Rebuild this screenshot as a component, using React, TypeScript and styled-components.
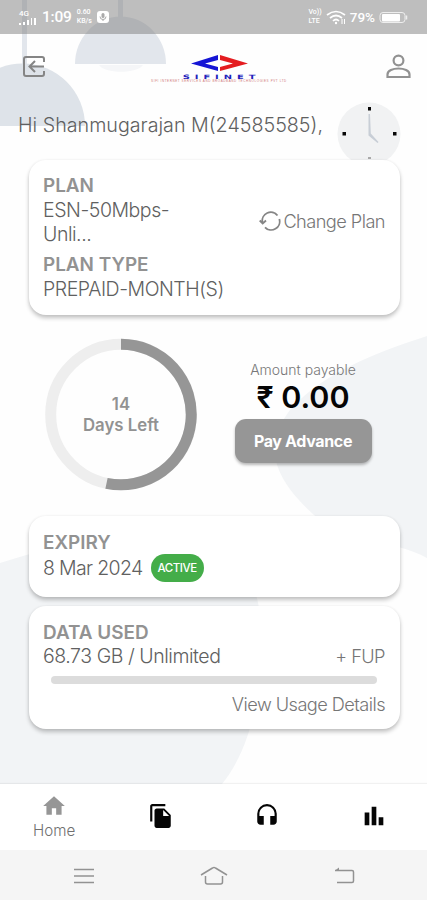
import React from "react";
import styled, { createGlobalStyle } from "styled-components";
import { MdBarChart, MdFileCopy, MdHeadset, MdHome } from "react-icons/md";

const GlobalStyle = createGlobalStyle`
  * { box-sizing: border-box; }
  body { margin: 0; background: #fff; font-family: Inter, "Noto Sans", sans-serif; }
  svg { display: block; flex: none; }
`;

const Screen = styled.div`
  position: relative;
  width: 427px;
  height: 900px;
  overflow: hidden;
  display: flex;
  flex-direction: column;
  background: #fefefe;
  color: #737373;
  isolation: isolate;
`;

const Backdrop = styled.svg`
  position: absolute;
  inset: 0;
  z-index: -1;
`;

const StatusBar = styled.div`
  display: flex;
  justify-content: space-between;
  height: 34px;
  padding: 0 18px 0 19px;
  background: rgba(128, 128, 128, 0.51);
  color: #fff;
`;

const StatusGroup = styled.div<{ $gap: number }>`
  display: flex;
  align-items: center;
  gap: ${(p) => p.$gap}px;
`;

const StatusText = styled.span<{ $size: number; $spacing?: number }>`
  font: 500 ${(p) => p.$size}px/20px Roboto, sans-serif;
  letter-spacing: ${(p) => p.$spacing ?? 0}px;
`;

const TinyStack = styled.div`
  display: flex;
  flex-direction: column;
  font: 500 7px/9px Roboto, sans-serif;
`;

const Signal = styled(TinyStack)`
  font-size: 8px;
`;

const Header = styled.header`
  display: flex;
  justify-content: space-between;
  align-items: flex-start;
  height: 67px;
  padding: 20px 16px 0 23px;
`;

const Brand = styled.div`
  display: flex;
  flex-direction: column;
  align-items: center;
  width: 138px;
  margin-left: 7px;
`;

const BrandName = styled.div`
  height: 5px;
  margin-top: 2px;
  padding-left: 3px;
  color: #2020bb;
  font: 700 6px/6px "DejaVu Sans", sans-serif;
  letter-spacing: 3px;
  transform: scaleX(1.65);
`;

const Tagline = styled.div`
  margin-top: 1px;
  color: #cf7777;
  font: 400 3px/3px "Liberation Sans", sans-serif;
  letter-spacing: 0.6px;
  white-space: nowrap;
`;

const Greeting = styled.div`
  display: flex;
  justify-content: space-between;
  height: 59px;
  padding: 0 26px 0 18px;
`;

const GreetingText = styled.div`
  padding-top: 12px;
  font-size: 19.7px;
  font-weight: 300;
  line-height: 24px;
  color: #606060;
  white-space: nowrap;
`;

const Card = styled.section<{ $height: number; $gap?: number; $top?: number }>`
  width: 371px;
  height: ${(p) => p.$height}px;
  margin: 0 0 ${(p) => p.$gap ?? 0}px 29px;
  padding: ${(p) => p.$top ?? 15}px 15px 0 14px;
  flex: none;
  border-radius: 17px;
  background: #fff;
  box-shadow: 0 3px 4px rgba(0, 0, 0, 0.23), 0 0 3px rgba(0, 0, 0, 0.06);
`;

const SplitRow = styled.div`
  display: flex;
  justify-content: space-between;
  align-items: center;
`;

const Label = styled.div`
  font-size: 18.9px;
  font-weight: 600;
  line-height: 24px;
  color: #929292;
  white-space: nowrap;
`;

const Value = styled.div<{ $spacing?: number }>`
  font-size: 19.5px;
  font-weight: 300;
  line-height: 24px;
  letter-spacing: ${(p) => p.$spacing ?? -0.45}px;
  color: #606060;
  white-space: nowrap;
`;

const PlanName = styled(Value)`
  width: 140px;
  white-space: normal;
`;

const PlanType = styled.div`
  margin-top: 7px;
`;

const LinkText = styled.div<{ $drop?: number }>`
  display: flex;
  align-items: center;
  justify-content: flex-end;
  gap: 2px;
  padding-top: ${(p) => p.$drop ?? 0}px;
  font-size: 18.2px;
  font-weight: 300;
  line-height: 24px;
  letter-spacing: -0.55px;
  color: #767676;
  white-space: nowrap;
`;

const Summary = styled.section`
  display: flex;
  height: 201px;
  padding: 23px 0 0 45px;
  flex: none;
`;

const DaysRing = styled.div`
  display: grid;
  width: 152px;
  height: 153px;
  place-items: center;
  > * { grid-area: 1 / 1; }
`;

const DaysText = styled.div`
  font-size: 16.8px;
  font-weight: 600;
  line-height: 21px;
  text-align: center;
  color: #929292;
`;

const Payment = styled.div`
  display: flex;
  flex-direction: column;
  align-items: center;
  width: 138px;
  margin-left: 37px;
  padding-top: 22px;
`;

const PaymentCaption = styled.div`
  font-size: 14px;
  font-weight: 300;
  line-height: 20px;
  color: #777;
`;

const Amount = styled.div`
  font-size: 30.5px;
  font-weight: 600;
  line-height: 34px;
  color: #050505;
  white-space: nowrap;
`;

const PayButton = styled.button`
  width: 137px;
  height: 44px;
  margin-top: 5px;
  padding: 0 0 1px;
  border: 0;
  border-radius: 11px;
  background: #969696;
  color: #fff;
  font: 700 16px Inter, sans-serif;
  letter-spacing: -0.35px;
  box-shadow: 0 2px 3px rgba(0, 0, 0, 0.28);
`;

const ExpiryRow = styled.div`
  display: flex;
  align-items: center;
  gap: 8px;
  height: 28px;
  margin-top: -1px;
`;

const Badge = styled.span`
  width: 53px;
  height: 28px;
  border-radius: 14px;
  background: #44ad49;
  color: #fff;
  font-size: 11.5px;
  font-weight: 500;
  line-height: 29px;
  letter-spacing: -0.45px;
  text-align: center;
`;

const UsageRow = styled(SplitRow)`
  margin-top: -1px;
`;

const UsageTrack = styled.div`
  height: 8px;
  margin: 8px 8px 8px;
  border-radius: 4px;
  background: #dcdcdc;
`;

const TabBar = styled.nav`
  display: grid;
  grid-template-columns: repeat(4, 1fr);
  height: 66px;
  margin-top: auto;
  padding: 0 0 2px 1px;
  flex: none;
  background: #fff;
  box-shadow: 0 -1px 1px rgba(0, 0, 0, 0.05);
`;

const Tab = styled.div<{ $active?: boolean }>`
  display: flex;
  flex-direction: column;
  align-items: center;
  justify-content: center;
  padding-top: ${(p) => (p.$active ? 2 : 0)}px;
  color: ${(p) => (p.$active ? "#969696" : "#050505")};
`;

const TabLabel = styled.div`
  margin-top: 2px;
  font-size: 15.2px;
  font-weight: 300;
  line-height: 20px;
  color: #707070;
`;

const SystemNav = styled.div`
  display: flex;
  align-items: center;
  justify-content: space-between;
  height: 50px;
  padding: 2px 72px 0 74px;
  flex: none;
  background: #f5f5f5;
`;

const Scenery = () => (
  <Backdrop width="427" height="900">
    <g fill="#e2e6ec">
      <path d="M22 0h5v64h-5zM118 0h5v18h-5zM75 64a45 47 0 0 1 91 0z" />
      <path d="M-40 126a62 62 0 0 1 125 0z" fill="#dee3e9" />
    </g>
    <path d="M99 65h44c-5 9-39 9-44 0z" fill="#f5f6f8" />
    <path d="M427 336C385 350 325 370 290 410C260 450 278 482 314 515C350 546 391 538 427 558Z" fill="#f2f4f6" />
    <path d="M0 563Q35 552 80 540H230Q262 585 262 640C262 700 247 754 222 784H0Z" fill="#f2f4f6" />
  </Backdrop>
);

const SignalIcon = () => (
  <svg width="18" height="7" fill="#fff">
    <path d="M0 5h2v2H0zM4 4h2v3H4zM8 2h2v5H8zM12 0h1v7h-1zM15 0h2v7h-2z" />
  </svg>
);

const MicIcon = () => (
  <svg width="12" height="12">
    <rect width="12" height="12" rx="3" fill="#fff" />
    <rect x="4.5" y="2" width="3" height="5" rx="1.5" fill="#aaa" />
    <path d="M3 5.5a3 3 0 0 0 6 0M6 8.5V10" fill="none" stroke="#aaa" />
  </svg>
);

const WifiIcon = () => (
  <svg width="20" height="15" fill="none" stroke="#fff" strokeWidth="1.7">
    <path d="M1 5Q10-2 19 5M4 8q6-5 12 0M7 11q3-3 6 0" />
    <circle cx="10" cy="13" r="1.2" fill="#fff" stroke="none" />
    <path d="M16 9v5M18.5 9v5" strokeWidth="1" />
  </svg>
);

const BatteryIcon = () => (
  <svg width="30" height="13">
    <rect x="1" y="1.5" width="25" height="10" rx="3" fill="none" stroke="#eee" />
    <rect x="3" y="3" width="18" height="7.5" rx="1" fill="#fff" />
    <path d="M27.5 4.5v4" stroke="#eee" strokeWidth="1.5" />
  </svg>
);

const ExitIcon = () => (
  <svg width="22" height="24" fill="none" stroke="#858585" strokeWidth="2">
    <path d="M21 8V5q0-2-2-2H3Q1 3 1 5v15q0 2 2 2H19q2 0 2-2v-3M21 12.500H7M12 7l-5.500 5.500L12 18" />
  </svg>
);

const LogoMark = () => (
  <svg width="57" height="18">
    <path d="M27 1v5L14 9.500 27 13v4L0 9.500z" fill="#1515d5" />
    <path d="M29 1v5l13 3.500L29 13v4l28-7.500z" fill="#e41c20" />
  </svg>
);

const PersonIcon = () => (
  <svg width="25" height="25" fill="none" stroke="#929292" strokeWidth="2.200">
    <circle cx="12.500" cy="6.500" r="4.900" />
    <path d="M1.500 23v-2.500c0-8 22-8 22 0V23z" />
  </svg>
);

const ClockIcon = () => (
  <svg width="64" height="64">
    <circle cx="32" cy="33" r="31.500" fill="#f1f2f3" />
    <path d="M31 6h3v3.500h-3zM5.500 31h3.500v3.500H5.500zM56 31h3.500v3.500H56z" fill="#080808" />
    <path d="M31 56h3v2h-3z" fill="#aaa" />
    <path d="M31.500 13h1.500l.8 19.500L41.500 41l-1 1-9-7.500z" fill="#c8ced6" />
  </svg>
);

const RefreshIcon = () => (
  <svg width="22" height="22" fill="none" stroke="#858585" strokeWidth="1.800">
    <path d="M3.500 12.500A8.500 8.500 0 0 1 18.500 5.500M20.300 9A8.500 8.500 0 0 1 6 17.300M.7 10.500l3 3 3.300-3" />
  </svg>
);

const Ring = () => (
  <svg width="152" height="153" fill="none" strokeWidth="11">
    <circle cx="76" cy="76.500" r="70.300" stroke="#eee" />
    <path d="M76 6.200A70.300 70.300 0 1 1 61.500 145.300" stroke="#969696" />
  </svg>
);

const MenuGlyph = () => (
  <svg width="20" height="16" stroke="#929292" strokeWidth="1.500">
    <path d="M0 1.500h20M0 8h20M0 14.500h20" />
  </svg>
);

const HomeGlyph = () => (
  <svg width="28" height="20" fill="none" stroke="#929292" strokeWidth="1.500">
    <path d="M1 9L12.500 2q1.500-1 3 0L27 9M5.500 10v6q0 2 2 2h13q2 0 2-2v-6" />
  </svg>
);

const BackGlyph = () => (
  <svg width="21" height="18" fill="none" stroke="#929292" strokeWidth="1.500">
    <path d="M1 3.500h17q1.500 0 1.500 1.500v9q0 1.500-1.500 1.500H3" />
    <path d="M1 3.500L5 .5v3z" fill="#929292" stroke="none" />
  </svg>
);

export default function App() {
  return (
    <Screen>
      <GlobalStyle />
      <Scenery />
      <StatusBar>
        <StatusGroup $gap={5}>
          <Signal>4G<SignalIcon /></Signal>
          <StatusText $size={15.5} $spacing={-0.2}>1:09</StatusText>
          <TinyStack><span>0.60</span><span>KB/s</span></TinyStack>
          <MicIcon />
        </StatusGroup>
        <StatusGroup $gap={4}>
          <TinyStack><span>Vo))</span><span>LTE</span></TinyStack>
          <WifiIcon />
          <StatusText $size={13.5}>79%</StatusText>
          <BatteryIcon />
        </StatusGroup>
      </StatusBar>

      <Header>
        <ExitIcon />
        <Brand>
          <LogoMark />
          <BrandName>SIFINET</BrandName>
          <Tagline>SIFI INTERNET SERVICES AND BROADBAND TECHNOLOGIES PVT LTD</Tagline>
        </Brand>
        <PersonIcon />
      </Header>

      <Greeting>
        <GreetingText>Hi Shanmugarajan M(24585585),</GreetingText>
        <ClockIcon />
      </Greeting>

      <Card $height={155} $top={14}>
        <SplitRow>
          <div>
            <Label>PLAN</Label>
            <PlanName>ESN-50Mbps-Unli...</PlanName>
          </div>
          <LinkText $drop={22}><RefreshIcon />Change Plan</LinkText>
        </SplitRow>
        <PlanType>
          <Label>PLAN TYPE</Label>
          <Value>PREPAID-MONTH(S)</Value>
        </PlanType>
      </Card>

      <Summary>
        <DaysRing>
          <Ring />
          <DaysText>14<br />Days Left</DaysText>
        </DaysRing>
        <Payment>
          <PaymentCaption>Amount payable</PaymentCaption>
          <Amount>₹ 0.00</Amount>
          <PayButton>Pay Advance</PayButton>
        </Payment>
      </Summary>

      <Card $height={81} $gap={9}>
        <Label>EXPIRY</Label>
        <ExpiryRow>
          <Value $spacing={-0.65}>8 Mar 2024</Value>
          <Badge>ACTIVE</Badge>
        </ExpiryRow>
      </Card>

      <Card $height={123}>
        <Label>DATA USED</Label>
        <UsageRow>
          <Value>68.73 GB / Unlimited</Value>
          <LinkText>+ FUP</LinkText>
        </UsageRow>
        <UsageTrack />
        <LinkText>View Usage Details</LinkText>
      </Card>

      <TabBar>
        <Tab $active><MdHome size={26} /><TabLabel>Home</TabLabel></Tab>
        <Tab><MdFileCopy size={26} /></Tab>
        <Tab><MdHeadset size={26} /></Tab>
        <Tab><MdBarChart size={28} /></Tab>
      </TabBar>
      <SystemNav>
        <MenuGlyph />
        <HomeGlyph />
        <BackGlyph />
      </SystemNav>
    </Screen>
  );
}
